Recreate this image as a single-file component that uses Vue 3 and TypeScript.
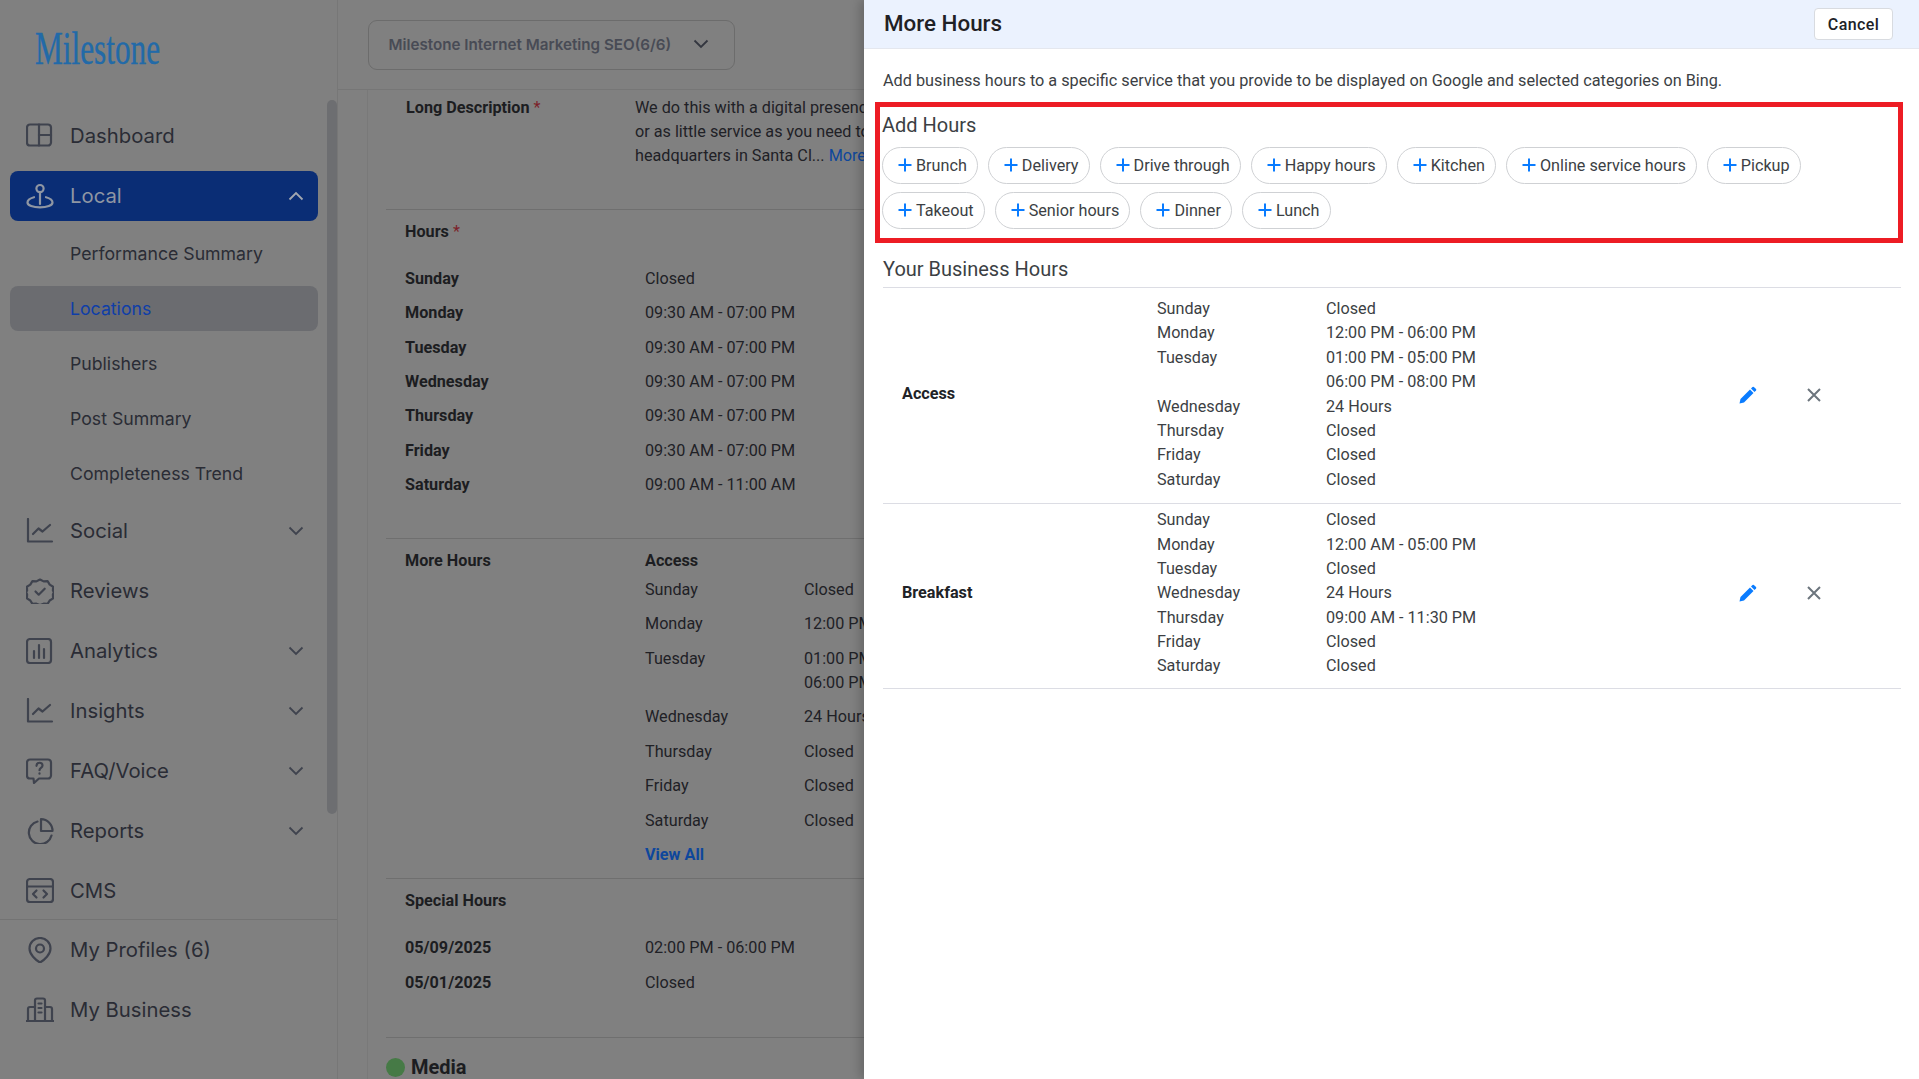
<script setup lang="ts">
interface NavItem {
  label: string;
  icon: string[];
  arrow?: boolean;
}

interface HourLine {
  day: string;
  time: string;
}

const icons: Record<string, string[]> = {
  dashboard: ["M4 1.5h18a3 3 0 0 1 3 3v15a3 3 0 0 1-3 3H4a3 3 0 0 1-3-3v-15a3 3 0 0 1 3-3z", "M13 1.5v21", "M13 12h12"],
  local: ["M14 2a3.6 3.6 0 1 1 0 7.2a3.6 3.6 0 0 1 0-7.2z", "M14 9.2v11.8", "M8 14.2C4.4 15.2 1.5 17 1.5 19.4c0 3 5.6 4.9 12.5 4.9s12.5-1.9 12.5-4.9c0-2.4-2.9-4.2-6.5-5.2"],
  chart: ["M2 1v22.5h24", "M7 16l5.5-5.5 4 3L24 7"],
  reviews: ["M14 1.5l3.6 1.9 4-.2 2.1 3.4 3.4 2.1-.2 4 1 1.3-1 2.4.2 4-3.4 2.1-2.1 3.4-4-.2-3.6 1.4-3.6-1.4-4 .2-2.1-3.4-3.4-2.1.2-4-1-2.4 1-1.3-.2-4 3.4-2.1 2.1-3.4 4 .2z", "M9.5 13.5l3.2 3.2 6-6"],
  analytics: ["M4 1h18a3 3 0 0 1 3 3v18a3 3 0 0 1-3 3H4a3 3 0 0 1-3-3V4a3 3 0 0 1 3-3z", "M8 13v7", "M13 7v13", "M18 11v9"],
  faq: ["M4 1.5h18a3 3 0 0 1 3 3v13a3 3 0 0 1-3 3H13l-5 4.5-.5-4.5H4a3 3 0 0 1-3-3v-13a3 3 0 0 1 3-3z", "M10.5 7.8c.2-4 6-4 6-.3 0 2.5-3 2.3-3 4.7", "M13.5 15.3v.4"],
  reports: ["M11.5 3.5a11.5 11.5 0 1 0 14 14", "M15 1.2a11.5 11.5 0 0 1 11.5 11.8H15z"],
  cms: ["M4 1h20a3 3 0 0 1 3 3v17a3 3 0 0 1-3 3H4a3 3 0 0 1-3-3V4a3 3 0 0 1 3-3z", "M1 8.5h26", "M10.5 12.5l-3.5 3.5 3.5 3.5", "M17.5 12.5l3.5 3.5-3.5 3.5"],
  profile: ["M14 1a10.5 10.5 0 0 1 10.5 10.5c0 6-6 11.500-10.500 14C9.500 23 3.500 17.500 3.500 11.500A10.500 10.500 0 0 1 14 1z", "M14 7.500a4 4 0 1 1 0 8a4 4 0 0 1 0-8z"],
  business: ["M9 23V3.500a2 2 0 0 1 2-2h6a2 2 0 0 1 2 2V23", "M9 10H4a2 2 0 0 0-2 2v11", "M19 10h5a2 2 0 0 1 2 2v11", "M0.500 24h27", "M12.500 6.500h3", "M12.500 11h3", "M12.500 15.500h3"],
};

const topNav: NavItem[] = [{ label: "Dashboard", icon: icons.dashboard }];
const localSub = ["Performance Summary", "Locations", "Publishers", "Post Summary", "Completeness Trend"];
const restNav: NavItem[] = [
  { label: "Social", icon: icons.chart, arrow: true },
  { label: "Reviews", icon: icons.reviews },
  { label: "Analytics", icon: icons.analytics, arrow: true },
  { label: "Insights", icon: icons.chart, arrow: true },
  { label: "FAQ/Voice", icon: icons.faq, arrow: true },
  { label: "Reports", icon: icons.reports, arrow: true },
  { label: "CMS", icon: icons.cms },
];
const bottomNav: NavItem[] = [
  { label: "My Profiles (6)", icon: icons.profile },
  { label: "My Business", icon: icons.business },
];

const regularHours: HourLine[] = [
  { day: "Sunday", time: "Closed" },
  { day: "Monday", time: "09:30 AM - 07:00 PM" },
  { day: "Tuesday", time: "09:30 AM - 07:00 PM" },
  { day: "Wednesday", time: "09:30 AM - 07:00 PM" },
  { day: "Thursday", time: "09:30 AM - 07:00 PM" },
  { day: "Friday", time: "09:30 AM - 07:00 PM" },
  { day: "Saturday", time: "09:00 AM - 11:00 AM" },
];
const specialHours: HourLine[] = [
  { day: "05/09/2025", time: "02:00 PM - 06:00 PM" },
  { day: "05/01/2025", time: "Closed" },
];
const accessPreview = [
  { day: "Sunday", times: ["Closed"] },
  { day: "Monday", times: ["12:00 PM - 06:00 PM"] },
  { day: "Tuesday", times: ["01:00 PM - 05:00 PM", "06:00 PM - 08:00 PM"] },
  { day: "Wednesday", times: ["24 Hours"] },
  { day: "Thursday", times: ["Closed"] },
  { day: "Friday", times: ["Closed"] },
  { day: "Saturday", times: ["Closed"] },
];

const chips = ["Brunch", "Delivery", "Drive through", "Happy hours", "Kitchen", "Online service hours", "Pickup", "Takeout", "Senior hours", "Dinner", "Lunch"];

const businessHours: { name: string; lines: HourLine[] }[] = [
  {
    name: "Access",
    lines: [
      { day: "Sunday", time: "Closed" },
      { day: "Monday", time: "12:00 PM - 06:00 PM" },
      { day: "Tuesday", time: "01:00 PM - 05:00 PM" },
      { day: "", time: "06:00 PM - 08:00 PM" },
      { day: "Wednesday", time: "24 Hours" },
      { day: "Thursday", time: "Closed" },
      { day: "Friday", time: "Closed" },
      { day: "Saturday", time: "Closed" },
    ],
  },
  {
    name: "Breakfast",
    lines: [
      { day: "Sunday", time: "Closed" },
      { day: "Monday", time: "12:00 AM - 05:00 PM" },
      { day: "Tuesday", time: "Closed" },
      { day: "Wednesday", time: "24 Hours" },
      { day: "Thursday", time: "09:00 AM - 11:30 PM" },
      { day: "Friday", time: "Closed" },
      { day: "Saturday", time: "Closed" },
    ],
  },
];
</script>

<template>
  <div class="page">
    <aside class="sidebar">
      <div class="logo"><span>Milestone</span></div>
      <div class="thumb"></div>
      <nav class="nav">
        <a v-for="item in topNav" :key="item.label" class="nav-item">
          <svg class="nav-icon" viewBox="0 0 28 26"><path v-for="d in item.icon" :key="d" :d="d" /></svg>
          <span>{{ item.label }}</span>
        </a>
        <a class="nav-item active">
          <svg class="nav-icon" viewBox="0 0 28 26"><path v-for="d in icons.local" :key="d" :d="d" /></svg>
          <span>Local</span>
          <svg class="arrow" viewBox="0 0 16 10"><path d="M1.500 8.500L8 2l6.500 6.500" /></svg>
        </a>
        <a v-for="sub in localSub" :key="sub" class="sub-item" :class="{ current: sub === 'Locations' }">{{ sub }}</a>
        <a v-for="item in restNav" :key="item.label" class="nav-item">
          <svg class="nav-icon" viewBox="0 0 28 26"><path v-for="d in item.icon" :key="d" :d="d" /></svg>
          <span>{{ item.label }}</span>
          <svg v-if="item.arrow" class="arrow" viewBox="0 0 16 10"><path d="M1.500 1.500L8 8l6.500-6.500" /></svg>
        </a>
      </nav>
      <nav class="nav bottom">
        <a v-for="item in bottomNav" :key="item.label" class="nav-item">
          <svg class="nav-icon" viewBox="0 0 28 26"><path v-for="d in item.icon" :key="d" :d="d" /></svg>
          <span>{{ item.label }}</span>
        </a>
      </nav>
    </aside>

    <main class="main">
      <header class="topbar">
        <div class="account-select">
          <span>Milestone Internet Marketing SEO(6/6)</span>
          <svg viewBox="0 0 16 10"><path d="M1.500 1.500L8 8l6.500-6.500" /></svg>
        </div>
      </header>
      <div class="content">
        <section class="block desc-block">
          <div class="desc-label">Long Description <em>*</em></div>
          <div class="desc-text">
            We do this with a digital presence<br />
            or as little service as you need to<br />
            headquarters in Santa Cl... <a>More</a>
          </div>
        </section>
        <section class="block hours-block">
          <div class="heading">Hours <em>*</em></div>
          <div class="hour-list">
            <div v-for="h in regularHours" :key="h.day" class="hour-row">
              <strong>{{ h.day }}</strong><span>{{ h.time }}</span>
            </div>
          </div>
        </section>
        <section class="block more-block">
          <div class="heading">More Hours</div>
          <div>
            <div class="heading">Access</div>
            <div v-for="a in accessPreview" :key="a.day" class="preview-row">
              <span>{{ a.day }}</span>
              <div><div v-for="t in a.times" :key="t">{{ t }}</div></div>
            </div>
            <a class="view-all">View All</a>
          </div>
        </section>
        <section class="block special-block">
          <div class="heading">Special Hours</div>
          <div class="hour-list">
            <div v-for="h in specialHours" :key="h.day" class="hour-row">
              <strong>{{ h.day }}</strong><span>{{ h.time }}</span>
            </div>
          </div>
        </section>
        <section class="media-block">
          <i class="dot"></i>
          <span>Media</span>
        </section>
      </div>
    </main>

    <div class="drawer">
      <header class="drawer-head">
        <h2>More Hours</h2>
        <button class="cancel">Cancel</button>
      </header>
      <div class="drawer-body">
        <p class="intro">Add business hours to a specific service that you provide to be displayed on Google and selected categories on Bing.</p>
        <section class="add-hours">
          <h3>Add Hours</h3>
          <div class="chips">
            <button v-for="c in chips" :key="c" class="chip">
              <svg viewBox="0 0 14 14"><path d="M7 .5v13M.5 7h13" /></svg>
              {{ c }}
            </button>
          </div>
        </section>
        <h3 class="your-title">Your Business Hours</h3>
        <div v-for="row in businessHours" :key="row.name" class="biz-row">
          <strong>{{ row.name }}</strong>
          <div class="biz-lines">
            <div v-for="(l, i) in row.lines" :key="i" class="biz-line">
              <span>{{ l.day }}</span><span>{{ l.time }}</span>
            </div>
          </div>
          <svg class="edit" viewBox="0 0 18 18">
            <path d="M.5 17.500L1.500 13 11 3.500 14.500 7 5 16.500z" />
            <path d="M12 2.500L13.500 1a1 1 0 0 1 1.400 0L17 3.100a1 1 0 0 1 0 1.400L15.500 6z" />
          </svg>
          <svg class="remove" viewBox="0 0 14 14"><path d="M1 1l12 12M13 1L1 13" /></svg>
        </div>
      </div>
    </div>
  </div>
</template>

<style>
html,
body {
  margin: 0;
  overflow: hidden;
}
</style>

<style scoped>
.page {
  position: relative;
  display: flex;
  height: 100vh;
  overflow: hidden;
  background: #808080;
  font-family: Roboto, "Liberation Sans", sans-serif;
  font-size: 16.2px;
  color: #202126;
}

/* sidebar */
.sidebar {
  position: relative;
  flex: 0 0 338px;
  box-sizing: border-box;
  border-right: 1px solid #777;
  font-family: Inter, "Liberation Sans", sans-serif;
}
.logo {
  height: 111px;
  box-sizing: border-box;
  padding: 26px 0 0 35px;
  color: #226aa8;
  font-family: "Liberation Serif", serif;
  font-size: 46px;
  line-height: 46px;
  -webkit-text-stroke: 0.4px #226aa8;
}
.logo span {
  display: inline-block;
  transform: scaleX(0.68);
  transform-origin: left;
}
.thumb {
  position: absolute;
  top: 100px;
  left: 327px;
  width: 10px;
  height: 714px;
  border-radius: 5px;
  background: #6d6e71;
}
.nav {
  display: flex;
  flex-direction: column;
  gap: 10px;
  padding: 0 19px 0 10px;
}
.nav.bottom {
  margin-top: 3px;
  padding-top: 5px;
  border-top: 1px solid #737373;
}
.nav-item {
  display: flex;
  align-items: center;
  gap: 16px;
  height: 50px;
  padding: 0 14px 1px 16px;
  box-sizing: border-box;
  border-radius: 8px;
  color: #2a2c35;
  font-size: 20.3px;
}
.nav-item.active {
  background: #0a2d75;
  color: #8f96a3;
}
.nav-icon {
  flex: 0 0 28px;
  height: 26px;
  fill: none;
  stroke: #3f434e;
  stroke-width: 2.2;
  stroke-linecap: round;
  stroke-linejoin: round;
}
.active .nav-icon {
  stroke: #8f96a3;
}
.arrow {
  width: 16px;
  height: 10px;
  margin-left: auto;
  fill: none;
  stroke: #3f434e;
  stroke-width: 1.8;
}
.active .arrow {
  stroke: #a2a7b0;
}
.sub-item {
  height: 45px;
  padding-left: 60px;
  border-radius: 8px;
  color: #2a2c35;
  font-size: 17.7px;
  line-height: 45px;
}
.sub-item.current {
  background: #6b6c70;
  color: #0f3ea8;
}

/* page behind the drawer */
.main {
  flex: 1;
  min-width: 0;
}
.topbar {
  display: flex;
  align-items: flex-start;
  height: 90px;
  box-sizing: border-box;
  padding: 20px 0 0 30px;
  border-bottom: 1px solid #767676;
}
.account-select {
  display: flex;
  align-items: center;
  justify-content: space-between;
  box-sizing: border-box;
  width: 367px;
  height: 50px;
  padding: 0 25px 2px 19.5px;
  border: 1px solid #6c6c6c;
  border-radius: 9px;
  color: #484b55;
  font-family: Inter, "Liberation Sans", sans-serif;
  font-size: 15.2px;
  font-weight: 600;
}
.account-select svg {
  width: 16px;
  height: 10px;
  fill: none;
  stroke: #33363f;
  stroke-width: 1.8;
}
.content {
  margin-left: 29px;
  padding-left: 18px;
  border-left: 1px solid #797979;
  line-height: 24px;
}
.block {
  border-bottom: 1px solid #6f6f6f;
}
.heading,
.desc-label,
.hour-row strong {
  font-weight: 700;
  color: #1c1d21;
}
em {
  color: #7c1f2a;
  font-style: normal;
  font-weight: 400;
}
.desc-block {
  display: grid;
  grid-template-columns: 229px 1fr;
  padding: 6px 0 41px 20px;
  white-space: nowrap;
}
.desc-text a {
  color: #0e479c;
}
.hours-block {
  padding: 10px 0 36px 19px;
}
.hour-list {
  margin-top: 18px;
}
.hour-row {
  display: grid;
  grid-template-columns: 240px 1fr;
  height: 34.3px;
  align-items: center;
}
.more-block {
  display: grid;
  grid-template-columns: 240px 1fr;
  padding: 9.5px 0 11px 19px;
}
.preview-row {
  display: grid;
  grid-template-columns: 159px 1fr;
  padding: 5.25px 0;
  white-space: nowrap;
}
.view-all {
  display: block;
  margin-top: 5px;
  color: #0e479c;
  font-weight: 700;
}
.special-block {
  padding: 10px 0 37px 19px;
}
.media-block {
  display: flex;
  align-items: center;
  gap: 6px;
  padding-top: 18px;
  font-size: 20px;
  line-height: 23px;
  font-weight: 700;
  color: #1c1d21;
}
.dot {
  width: 19px;
  height: 19px;
  border-radius: 50%;
  background: #467a46;
}

/* drawer */
.drawer {
  position: absolute;
  top: 0;
  right: 0;
  bottom: 0;
  width: 1055px;
  background: #fff;
  box-shadow: -4px 0 10px rgba(0, 0, 0, 0.2);
  color: #3c3f44;
}
.drawer-head {
  display: flex;
  align-items: center;
  justify-content: space-between;
  height: 49px;
  box-sizing: border-box;
  padding: 0 26px 0 20px;
  background: #ebf2fe;
  border-bottom: 1px solid #e4e7ee;
}
.drawer-head h2 {
  margin: 0 0 2px;
  color: #1f2125;
  font-size: 22.4px;
  font-weight: 500;
}
.cancel {
  width: 79px;
  height: 32px;
  padding: 0;
  border: 1px solid #d8dbe0;
  border-radius: 4px;
  background: #fff;
  color: #202227;
  font-family: inherit;
  font-size: 16px;
  font-weight: 500;
  letter-spacing: 0.4px;
}
.drawer-body {
  padding: 20px 18px 0 19px;
}
.intro {
  margin: 0 0 9px;
  font-size: 16.25px;
  line-height: 24px;
}
.add-hours {
  margin: 0 -2px 0 -8px;
  padding: 6px 2px 9px 2px;
  border: 5px solid #ed1c24;
}
.add-hours h3,
.your-title {
  margin: 0;
  font-size: 20px;
  font-weight: 400;
  line-height: 24px;
}
.chips {
  display: flex;
  flex-wrap: wrap;
  gap: 8px 10px;
  margin-top: 10px;
}
.chip {
  display: flex;
  align-items: center;
  gap: 4px;
  height: 37px;
  padding: 0 10px 1px 15px;
  border: 1px solid #cfd1d4;
  border-radius: 19px;
  background: #fff;
  color: #3c3f44;
  font-family: inherit;
  font-size: 16.2px;
}
.chip svg {
  width: 14px;
  height: 14px;
  fill: none;
  stroke: #0a7cff;
  stroke-width: 2;
}
.your-title {
  margin-top: 14px;
  padding-bottom: 5.5px;
  border-bottom: 1px solid #dcdde4;
}
.biz-row {
  display: grid;
  grid-template-columns: 274px 1fr 66px 66px;
  align-items: center;
  padding: 4.5px 54px 9.5px 0;
  border-bottom: 1px solid #dcdde4;
  line-height: 24.4px;
}
.biz-row:nth-of-type(1) {
  padding-top: 9.5px;
  padding-bottom: 10.5px;
}
.biz-row strong {
  padding-left: 19px;
  color: #212327;
}
.biz-line {
  display: grid;
  grid-template-columns: 169px 1fr;
  height: 24.4px;
}
.edit {
  justify-self: center;
  width: 18px;
  height: 18px;
  fill: #0a7cff;
}
.remove {
  justify-self: center;
  width: 14px;
  height: 14px;
  fill: none;
  stroke: #6c757d;
  stroke-width: 2;
}
</style>
